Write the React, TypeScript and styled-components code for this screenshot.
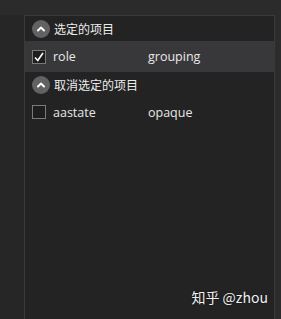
import React from "react";
import styled, { createGlobalStyle } from "styled-components";

const Global = createGlobalStyle`
  html, body { margin: 0; padding: 0; background: #2a2a2b; }
  #root { width: 281px; height: 319px; }
`;

const Frame = styled.div`
  width: 281px;
  height: 319px;
  background: #2a2a2b;
  display: flex;
  flex-direction: column;
  overflow: hidden;
  position: relative;
`;

const TopBar = styled.div`
  height: 15px;
  flex: none;
  background: #2b2b2c;
`;

const Body = styled.div`
  flex: 1;
  display: flex;
  min-height: 0;
`;

const LeftStrip = styled.div`
  width: 24px;
  flex: none;
  background: #262626;
`;

const RightStrip = styled.div`
  width: 6px;
  flex: none;
  background: #2c2c2d;
`;

const Panel = styled.div`
  flex: 1;
  background: #232323;
  border: 1px solid #3a3a3b;
  border-bottom: none;
  display: flex;
  flex-direction: column;
  font-family: "Open Sans", "Noto Sans", "Noto Sans CJK SC", sans-serif;
  color: #e6e6e6;
`;

const Header = styled.div`
  height: 25px;
  display: flex;
  align-items: center;
  padding-left: 7px;
  gap: 4px;
  font-family: "Noto Sans CJK SC", sans-serif;
  font-size: 12px;
  color: #ececec;
`;

const Circle = styled.div`
  width: 18px;
  height: 18px;
  border-radius: 50%;
  background: #626262;
  display: flex;
  align-items: center;
  justify-content: center;
`;

const Row = styled.div<{ $selected?: boolean; $h: number }>`
  height: ${(p) => p.$h}px;
  display: flex;
  align-items: center;
  padding-left: 7px;
  background: ${(p) => (p.$selected ? "#38383b" : "transparent")};
  font-size: 12.5px;
`;

const Box = styled.div`
  width: 12px;
  height: 12px;
  border: 1px solid #7a7a7a;
  background: #1e1e1e;
  display: flex;
  align-items: center;
  justify-content: center;
  margin-right: 7px;
`;

const Name = styled.span`
  width: 95px;
  color: #e8e8e8;
`;

const Value = styled.span`
  color: #e8e8e8;
`;

const Watermark = styled.div`
  position: absolute;
  right: 13px;
  bottom: 12px;
  font-family: "Noto Sans CJK SC", sans-serif;
  font-size: 14px;
  color: #f0f0f0;
  text-shadow: 0 0 2px rgba(0,0,0,0.6);
`;

const Chevron = () => (
  <svg width="10" height="10" viewBox="0 0 10 10">
    <path d="M2 6.5 L5 3.5 L8 6.5" fill="none" stroke="#ffffff" strokeWidth="2" strokeLinecap="round" strokeLinejoin="round" />
  </svg>
);

const Check = () => (
  <svg width="12" height="12" viewBox="0 0 12 12">
    <path d="M2 6.5 L4.8 9.5 L10 2" fill="none" stroke="#ffffff" strokeWidth="1.6" />
  </svg>
);

export default function App() {
  return (
    <Frame>
      <Global />
      <TopBar />
      <Body>
        <LeftStrip />
        <Panel>
          <Header>
            <Circle><Chevron /></Circle>
            选定的项目
          </Header>
          <Row $selected $h={31}>
            <Box><Check /></Box>
            <Name>role</Name>
            <Value>grouping</Value>
          </Row>
          <Header>
            <Circle><Chevron /></Circle>
            取消选定的项目
          </Header>
          <Row $h={30}>
            <Box />
            <Name>aastate</Name>
            <Value>opaque</Value>
          </Row>
        </Panel>
        <RightStrip />
      </Body>
      <Watermark>知乎 @zhou</Watermark>
    </Frame>
  );
}
